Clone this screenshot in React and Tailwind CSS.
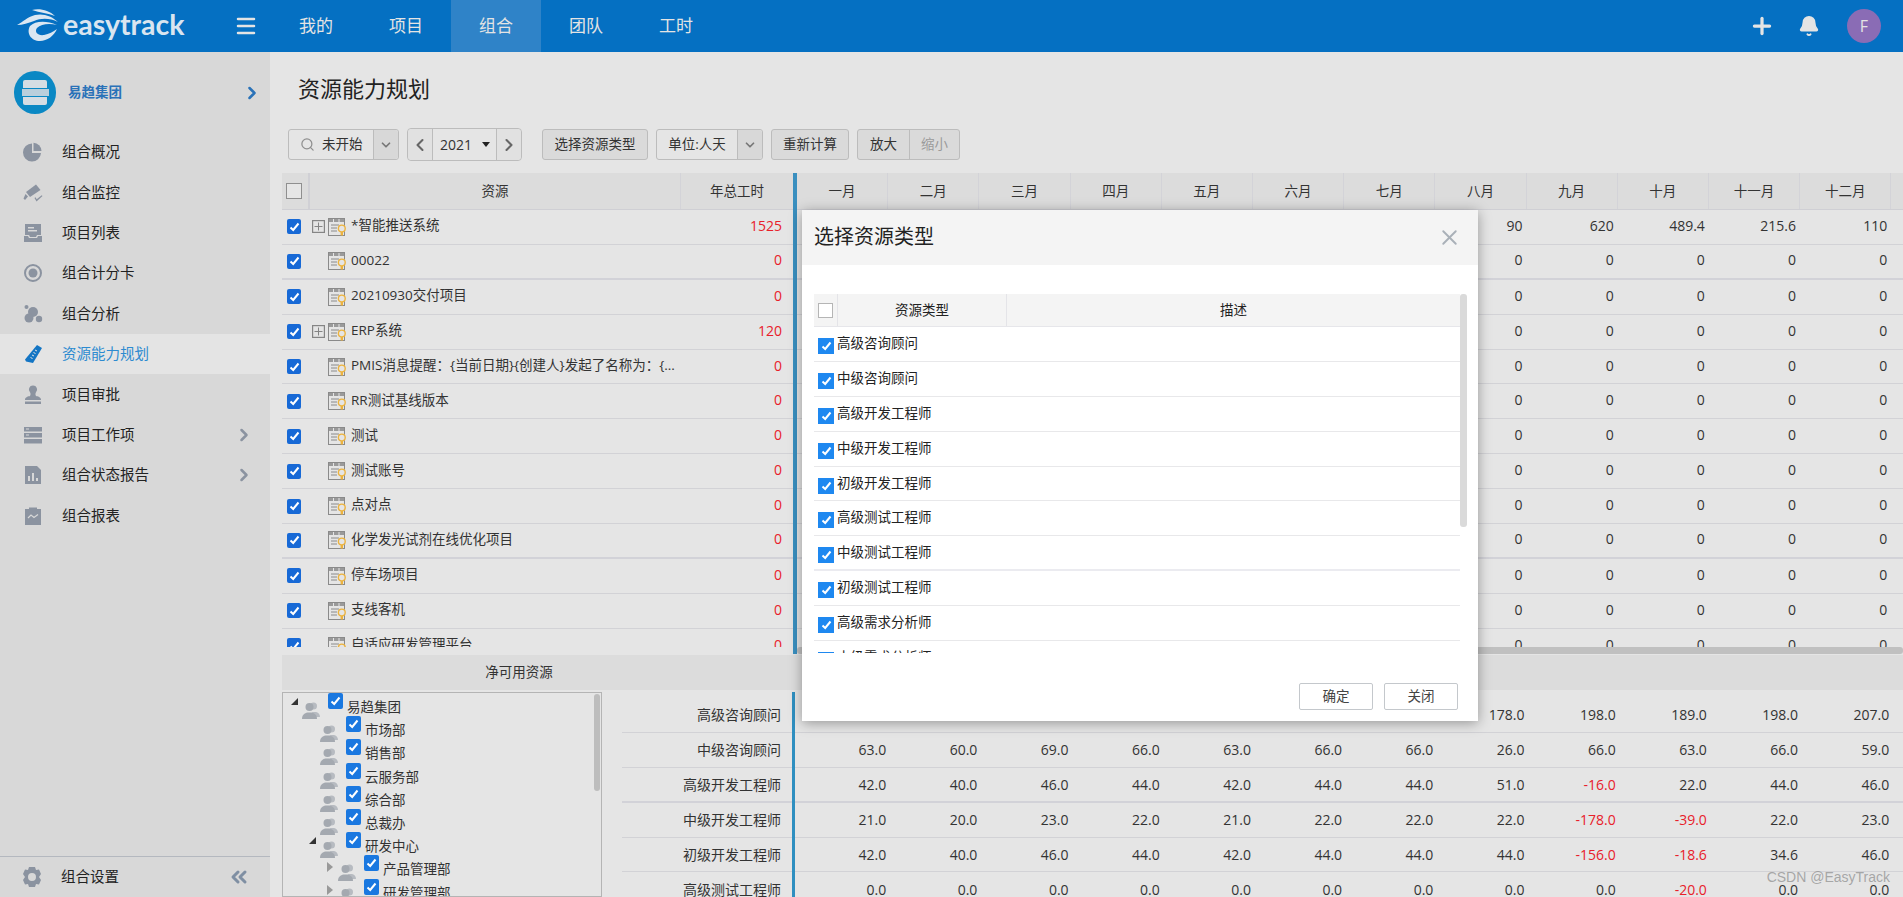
import { Plus, Bell, Menu, ChevronRight, ChevronLeft, ChevronDown, ChevronsLeft, Search, X } from "lucide-react";

const FONT = "font-['Open_Sans','Noto_Sans_CJK_SC',sans-serif]";

const MONTHS = ["一月", "二月", "三月", "四月", "五月", "六月", "七月", "八月", "九月", "十月", "十一月", "十二月"];

const NAV = ["我的", "项目", "组合", "团队", "工时"];

const PROJECTS = [
  { name: "*智能推送系统", total: "1525", tree: true, months: ["", "", "", "", "", "", "", "90", "620", "489.4", "215.6", "110"] },
  { name: "00022", total: "0", thick: true },
  { name: "20210930交付项目", total: "0" },
  { name: "ERP系统", total: "120", tree: true },
  { name: "PMIS消息提醒：{当前日期}{创建人}发起了名称为：{...", total: "0" },
  { name: "RR测试基线版本", total: "0" },
  { name: "测试", total: "0" },
  { name: "测试账号", total: "0" },
  { name: "点对点", total: "0" },
  { name: "化学发光试剂在线优化项目", total: "0", thick: true },
  { name: "停车场项目", total: "0" },
  { name: "支线客机", total: "0" },
  { name: "自适应研发管理平台", total: "0" },
];

const NET = [
  { label: "高级咨询顾问", values: ["", "", "", "", "", "", "", "178.0", "198.0", "189.0", "198.0", "207.0"] },
  { label: "中级咨询顾问", values: ["63.0", "60.0", "69.0", "66.0", "63.0", "66.0", "66.0", "26.0", "66.0", "63.0", "66.0", "59.0"] },
  { label: "高级开发工程师", thick: true, values: ["42.0", "40.0", "46.0", "44.0", "42.0", "44.0", "44.0", "51.0", "-16.0", "22.0", "44.0", "46.0"] },
  { label: "中级开发工程师", values: ["21.0", "20.0", "23.0", "22.0", "21.0", "22.0", "22.0", "22.0", "-178.0", "-39.0", "22.0", "23.0"] },
  { label: "初级开发工程师", values: ["42.0", "40.0", "46.0", "44.0", "42.0", "44.0", "44.0", "44.0", "-156.0", "-18.6", "34.6", "46.0"] },
  { label: "高级测试工程师", values: ["0.0", "0.0", "0.0", "0.0", "0.0", "0.0", "0.0", "0.0", "0.0", "-20.0", "0.0", "0.0"] },
];

const TREE = [
  { name: "易趋集团", level: 0, arrow: "open" },
  { name: "市场部", level: 1 },
  { name: "销售部", level: 1 },
  { name: "云服务部", level: 1 },
  { name: "综合部", level: 1 },
  { name: "总裁办", level: 1 },
  { name: "研发中心", level: 1, arrow: "open" },
  { name: "产品管理部", level: 2, arrow: "closed" },
  { name: "研发管理部", level: 2, arrow: "closed" },
];

const TYPES = [
  "高级咨询顾问",
  "中级咨询顾问",
  "高级开发工程师",
  "中级开发工程师",
  "初级开发工程师",
  "高级测试工程师",
  "中级测试工程师",
  "初级测试工程师",
  "高级需求分析师",
  "中级需求分析师",
];

function Logo() {
  return (
    <svg width="42" height="34" viewBox="0 0 42 34" fill="#dbe7f2">
      <path d="M15 1 C22 -1 32 1 38 7 C31 4 23 4 15 1Z" />
      <path d="M0 16 C6 13 10 8 18 6 C26 4 35 7 41 13 C33 9 24 9 17 12 C11 14 6 16 0 16Z" />
      <path d="M13 17 C18 12 29 11 40 16 C32 14 24 15 20 19 C17 23 21 27 27 26 C32 25 36 23 40 20 C37 27 30 32 23 32 C14 32 9 24 13 17Z" />
    </svg>
  );
}

const ICON_COLOR = "#8b93a0";

function MenuIcon({ name, color = ICON_COLOR }) {
  const p = { width: 20, height: 20, viewBox: "0 0 20 20", fill: color };
  switch (name) {
    case "pie":
      return (
        <svg {...p}>
          <path d="M9 1.500v9.500h9A9 9 0 1 1 9 1.500Z" />
          <path d="M10.500 0.800a8.600 8.600 0 0 1 8 8.200h-8Z" />
        </svg>
      );
    case "camera":
      return (
        <svg {...p}>
          <path d="M3 9 13 1.500l4.500 5.500L7 14Z" />
          <path d="M0.500 15.500l2-4.500 2.500 2.500-3 3.500Z" />
          <path d="M11.500 15l2 3.500 6-5.500-.8-.8-5 4-1.200-2Z" />
        </svg>
      );
    case "inbox":
      return (
        <svg {...p}>
          <path d="M2 1h16v11h-4l-1 2H7l-1-2H2Z" />
          <path d="M1 13h4l1 2h8l1-2h4v6H1Z" />
          <rect x="5" y="4" width="6" height="1.500" fill="#d8d8d8" />
          <rect x="5" y="7" width="9" height="1.500" fill="#d8d8d8" />
        </svg>
      );
    case "target":
      return (
        <svg {...p}>
          <path fillRule="evenodd" d="M10 1a9 9 0 1 1 0 18 9 9 0 0 1 0-18Zm0 2a7 7 0 1 0 0 14 7 7 0 0 0 0-14Z" />
          <circle cx="10" cy="10" r="4.500" />
        </svg>
      );
    case "dots":
      return (
        <svg {...p}>
          <circle cx="3.500" cy="3" r="2" />
          <circle cx="10" cy="8" r="5" />
          <circle cx="6" cy="14" r="4.500" />
          <circle cx="16" cy="15" r="3.200" />
        </svg>
      );
    case "ruler":
      return (
        <svg {...p}>
          <path d="M14 1l5 3-9 15-7-1.500-1-2Z" />
          <path d="M12 6l2 1M10.500 8.500l2 1M9 11l2 1M7.500 13.500l2 1" stroke="#e4e4e4" strokeWidth="1" />
        </svg>
      );
    case "stamp":
      return (
        <svg {...p}>
          <path d="M10 0.500a4 4 0 0 1 3 6.800c-.6 1-.8 2.400 0 3.700 1.500.4 5 1 5 3.500v.5H2V14.500c0-2.500 3.500-3.100 5-3.500.8-1.300.6-2.700 0-3.700A4 4 0 0 1 10 .5Z" />
          <rect x="2" y="16.500" width="16" height="2.500" />
        </svg>
      );
    case "rows":
      return (
        <svg {...p}>
          <rect x="1" y="2" width="18" height="4.500" />
          <rect x="1" y="8" width="18" height="4.500" />
          <rect x="1" y="14" width="18" height="4.500" />
          <rect x="3" y="3.500" width="3" height="1" fill="#d8d8d8" />
          <rect x="3" y="9.500" width="3" height="1" fill="#d8d8d8" />
        </svg>
      );
    case "report":
      return (
        <svg {...p}>
          <path d="M2 1h12l4 4v14H2Z" />
          <rect x="5" y="11" width="2" height="5" fill="#d8d8d8" />
          <rect x="9" y="8" width="2" height="8" fill="#d8d8d8" />
          <rect x="13" y="13" width="2" height="3" fill="#d8d8d8" />
        </svg>
      );
    case "clipboard":
      return (
        <svg {...p}>
          <path d="M2 3h4V1.500h8V3h4v16H2Z" />
          <path d="M5 12l3-3 3 2.500 4-3" stroke="#d8d8d8" strokeWidth="1.200" fill="none" />
        </svg>
      );
    default:
      return null;
  }
}

const MENU = [
  { name: "组合概况", icon: "pie" },
  { name: "组合监控", icon: "camera" },
  { name: "项目列表", icon: "inbox" },
  { name: "组合计分卡", icon: "target" },
  { name: "组合分析", icon: "dots" },
  { name: "资源能力规划", icon: "ruler", active: true },
  { name: "项目审批", icon: "stamp" },
  { name: "项目工作项", icon: "rows", more: true },
  { name: "组合状态报告", icon: "report", more: true },
  { name: "组合报表", icon: "clipboard" },
];

function Sidebar() {
  return (
    <aside className="w-[270px] shrink-0 bg-[#d8d8d8] flex flex-col">
      <div className="h-[80px] pt-[19px] pl-[14px] pr-[8px] flex items-start">
        <div className="w-[42px] h-[43px] rounded-full bg-[#0a88c4] flex flex-col items-center justify-center">
          <div className="w-[24px] h-[8px] rounded-t-[2px] bg-[#d5dde3]" />
          <div className="w-[27px] h-[7px] mt-px bg-[#b9cfdc]" />
          <div className="w-[24px] h-[8px] mt-px rounded-b-[2px] bg-[#d5dde3]" />
        </div>
        <span className="ml-[12px] mt-[11px] text-[13.500px] font-bold text-[#2a72b8]">易趋集团</span>
        <ChevronRight className="ml-auto mt-[12px] text-[#2a72b8]" size={20} strokeWidth={3} />
      </div>
      <nav>
        {MENU.map((item) => (
          <div
            key={item.name}
            className={`h-[40.400px] flex items-center pl-[23px] pr-[16px] text-[14.500px] ${
              item.active ? "bg-[#e4e4e4] text-[#2d8bd0]" : "text-[#222]"
            }`}
          >
            <MenuIcon name={item.icon} color={item.active ? "#1375c4" : ICON_COLOR} />
            <span className="ml-[19px]">{item.name}</span>
            {item.more && <ChevronRight className="ml-auto text-[#8b93a0]" size={20} strokeWidth={3} />}
          </div>
        ))}
      </nav>
      <div className="mt-auto h-[41px] border-t border-[#b4b8bf] flex items-center pl-[22px] pr-[19px] text-[14.500px] text-[#222]">
        <svg width="20" height="22" viewBox="0 0 20 22" fill={ICON_COLOR}>
          <path fillRule="evenodd" d="M7 1h6l1 3 3-.5L19 8l-2 3 2 3-2 4.500-3-.5-1 3H7l-1-3-3 .5L1 14l2-3-2-3 2-4.500L6 4ZM10 7a4 4 0 1 0 0 8 4 4 0 0 0 0-8Z" />
        </svg>
        <span className="ml-[19px]">组合设置</span>
        <ChevronsLeft className="ml-auto text-[#7f8fa3]" size={24} strokeWidth={3} />
      </div>
    </aside>
  );
}

function TopBar() {
  return (
    <header className="h-[52px] shrink-0 bg-[#0570c2] flex items-center text-[#e4e4e4]">
      <div className="w-[226px] shrink-0 flex items-center pl-[17px]">
        <Logo />
        <span className="ml-[4px] mb-[3px] font-['Lato',sans-serif] font-bold text-[28.500px] leading-none text-[#d9e5f0]">easytrack</span>
      </div>
      <Menu className="ml-[8px] w-[24px] shrink-0 text-[#e4e4e4]" size={24} strokeWidth={2.500} />
      <div className="ml-[13px] flex h-full">
        {NAV.map((n) => (
          <div
            key={n}
            className={`w-[90px] flex items-center justify-center text-[17px] ${n === "组合" ? "bg-[#2f83c8]" : ""}`}
          >
            {n}
          </div>
        ))}
      </div>
      <div className="ml-auto flex items-center pr-[22px]">
        <Plus size={26} strokeWidth={3} />
        <Bell className="ml-[23px]" size={22} fill="#e4e4e4" />
        <div className="ml-[27px] w-[34px] h-[34px] rounded-full bg-[#8a6cb5] flex items-center justify-center text-[16px] text-[#e4e4e4]">
          F
        </div>
      </div>
    </header>
  );
}

function Check({ on = true, box = "w-[14px] h-[15px]", color = "bg-[#1769d6]" }) {
  if (!on) return <span className="block w-[16px] h-[16px] border border-[#8f8f8f] bg-[#e6e6e6]" />;
  return (
    <span className={`${box} ${color} rounded-[2px] flex items-center justify-center shrink-0`}>
      <svg width="11" height="10" viewBox="0 0 11 10" fill="none">
        <path d="M1.500 5.500 4.200 8 9.500 1.500" stroke="#fff" strokeWidth="2" />
      </svg>
    </span>
  );
}

function ProjectIcon() {
  return (
    <svg width="18" height="18" viewBox="0 0 18 18" className="shrink-0">
      <rect x="0.500" y="0.500" width="16" height="17" fill="#e5e5e5" stroke="#8a8a8a" />
      <rect x="1" y="1" width="15" height="3" fill="#9a9a9a" />
      <path d="M5.500 1v3M11 1v3" stroke="#e5e5e5" />
      <path d="M3 7h8M3 10h6M3 13h6" stroke="#8a8a8a" />
      <circle cx="13.800" cy="10.500" r="3.400" fill="#e5e5e5" stroke="#ecb33f" strokeWidth="1.400" />
      <path d="M12.600 14h2.400v3.500h-2.400Z" fill="#ecb33f" />
    </svg>
  );
}

function ExpandBox() {
  return (
    <svg width="13" height="13" viewBox="0 0 13 13" fill="none" stroke="#858585">
      <rect x="0.500" y="0.500" width="12" height="12" strokeWidth="1.400" />
      <path d="M6.500 2.500v8M2.500 6.500h8" />
    </svg>
  );
}

function Person({ className = "" }) {
  return (
    <svg width="18" height="18" viewBox="0 0 18 18" fill="#a4a9b0" className={`shrink-0 ${className}`}>
      <circle cx="11.500" cy="5" r="3.500" fill="#b7bbc1" />
      <path d="M10 11h4c2 .5 4 2 4 5h-6Z" fill="#b7bbc1" />
      <circle cx="7.500" cy="6" r="4" />
      <path d="M0 18c0-4 2.500-6 5.500-6.500h4c3 .5 5.500 2.500 5.500 6.500Z" />
    </svg>
  );
}

function GroupBtn({ children, className = "" }) {
  return (
    <div className={`h-[31px] border border-[#bcbcbc] rounded-[3px] bg-[#dadada] flex items-center justify-center text-[13.500px] text-[#333] ${className}`}>
      {children}
    </div>
  );
}

function Toolbar() {
  return (
    <div className="h-[31px] mt-[24px] ml-[18px] flex items-center">
      <div className="w-[111px] h-[31px] border border-[#bcbcbc] rounded-[3px] flex items-center text-[13.500px] text-[#333]">
        <Search className="ml-[11px] text-[#8f8f8f]" size={15} />
        <span className="ml-[7px]">未开始</span>
        <span className="ml-auto w-[25px] h-full bg-[#d8d8d8] border-l border-[#bcbcbc] flex items-center justify-center rounded-r-[3px]">
          <ChevronDown className="text-[#777]" size={14} strokeWidth={3} />
        </span>
      </div>
      <div className="ml-[8px] w-[115px] h-[33px] border border-[#bcbcbc] rounded-[4px] flex items-center text-[14px] text-[#333]">
        <span className="w-[25px] h-full bg-[#e1e1e1] flex items-center justify-center rounded-l-[4px] border-r border-[#bcbcbc]">
          <ChevronLeft className="text-[#666]" size={20} strokeWidth={2.500} />
        </span>
        <span className="flex-1 h-full flex items-center justify-between pl-[7px] pr-[6px]">
          2021
          <span className="w-0 h-0 border-x-[4px] border-x-transparent border-t-[5px] border-t-[#222]" />
        </span>
        <span className="w-[25px] h-full bg-[#e1e1e1] flex items-center justify-center rounded-r-[4px] border-l border-[#bcbcbc]">
          <ChevronRight className="text-[#666]" size={20} strokeWidth={2.500} />
        </span>
      </div>
      <GroupBtn className="ml-[20px] w-[106px]">选择资源类型</GroupBtn>
      <div className="ml-[8px] w-[107px] h-[31px] border border-[#bcbcbc] rounded-[3px] flex items-center text-[13.500px] text-[#333]">
        <span className="flex-1 text-center">单位:人天</span>
        <span className="w-[25px] h-full bg-[#d8d8d8] border-l border-[#bcbcbc] flex items-center justify-center rounded-r-[3px]">
          <ChevronDown className="text-[#777]" size={14} strokeWidth={3} />
        </span>
      </div>
      <GroupBtn className="ml-[8px] w-[78px]">重新计算</GroupBtn>
      <div className="ml-[8px] w-[103px] h-[31px] border border-[#bcbcbc] rounded-[3px] bg-[#dadada] flex items-center text-[13.500px]">
        <span className="w-[52px] text-center text-[#333] border-r border-[#bcbcbc] leading-[29px]">放大</span>
        <span className="flex-1 text-center text-[#9a9a9a]">缩小</span>
      </div>
    </div>
  );
}

function ResourceTable() {
  return (
    <div className="h-[481px] mt-[13px] ml-[12px] flex text-[14px] text-[#333]">
      {/* frozen columns */}
      <div className="w-[511px] h-[474px] overflow-hidden shrink-0">
        <div className="h-[37px] flex bg-[#dcdcdc] border-b border-[#cfcfd4] text-[13.500px] items-center">
          <div className="w-[28px] h-full flex items-center justify-center border-r-2 border-[#d0d0d5] pr-[2px]">
            <Check on={false} />
          </div>
          <div className="w-[370px] text-center">资源</div>
          <div className="flex-1 h-full flex items-center justify-center border-l border-[#d3d3d8]">年总工时</div>
        </div>
        {PROJECTS.map((p) => (
          <div
            key={p.name}
            className={`h-[34.900px] flex items-center ${p.thick ? "border-b-2 border-[#d2d2d8]" : "border-b border-[#d2d2d6]"}`}
          >
            <div className="w-[30px] pl-[5px] shrink-0">
              <Check />
            </div>
            <div className="w-[16px] shrink-0 flex">{p.tree && <ExpandBox />}</div>
            <ProjectIcon />
            <span className="ml-[5px] mb-[3px] flex-1 truncate text-[13.500px]">{p.name}</span>
            <span className="mb-[3px] w-[60px] pr-[11px] text-right text-[#e8202a] shrink-0">{p.total}</span>
          </div>
        ))}
      </div>
      <div className="w-[4px] h-[481px] bg-[#3a8fbf] shrink-0" />
      {/* month columns */}
      <div className="flex-1 min-w-0 flex flex-col">
        <div className="h-[474px] overflow-hidden">
          <div className="h-[37px] flex bg-[#dcdcdc] border-b border-[#cfcfd4] text-[13.500px]">
            {MONTHS.map((m) => (
              <div key={m} className="w-[91.200px] shrink-0 flex items-center justify-center border-r border-[#d3d3d8]">
                {m}
              </div>
            ))}
          </div>
          {PROJECTS.map((p) => (
            <div
              key={p.name}
              className={`h-[34.900px] flex items-center ${p.thick ? "border-b-2 border-[#d2d2d8]" : "border-b border-[#d2d2d6]"}`}
            >
              {MONTHS.map((m, i) => (
                <div key={m} className="w-[91.200px] shrink-0 pr-[4px] mb-[3px] text-right">
                  {p.months ? p.months[i] : "0"}
                </div>
              ))}
            </div>
          ))}
        </div>
        <div className="h-[7px] rounded-[3px] bg-[#c0c0c0]" />
      </div>
    </div>
  );
}

function NetResources() {
  return (
    <>
      <div className="ml-[12px] mt-[1px] h-[35px] bg-[#dcdcdc] text-[13.500px] text-[#333]">
        <div className="w-[474px] h-full flex items-center justify-center">净可用资源</div>
      </div>
      <div className="ml-[12px] mt-[2px] flex flex-1 min-h-0 text-[14px] text-[#333]">
        <div className="w-[320px] relative border border-[#b4b4b4] shrink-0 overflow-hidden">
          {TREE.map((t) => (
            <div
              key={t.name}
              className={`h-[23.200px] flex items-start ${
                t.level === 0 ? "pl-[8px]" : t.level === 1 ? "pl-[26px]" : "pl-[44px]"
              }`}
            >
              <span className="w-[12px] h-[23px] flex items-center shrink-0">
                {t.arrow === "open" && (
                  <span className="block mb-[6px] w-0 h-0 border-l-[7px] border-l-transparent border-b-[7px] border-b-[#333]" />
                )}
                {t.arrow === "closed" && (
                  <span className="block w-0 h-0 border-y-[5px] border-y-transparent border-l-[6px] border-l-[#999]" />
                )}
              </span>
              <Person className="mt-[8px] -ml-[1px]" />
              <span className="ml-[8px] shrink-0">
                <Check box="w-[15px] h-[16px]" color="bg-[#1a78e0]" />
              </span>
              <span className="ml-[4px] mt-[4px] text-[13.500px] whitespace-nowrap">{t.name}</span>
            </div>
          ))}
          <div className="absolute right-[1px] top-[1px] w-[6px] h-[97px] rounded-[3px] bg-[#bdbdbd]" />
        </div>
        <div className="flex-1 min-w-0 flex pl-[20px]">
          <div className="w-[170px] shrink-0 pt-[6px]">
            {NET.map((r) => (
              <div
                key={r.label}
                className={`h-[34.900px] pr-[11px] flex items-center justify-end ${r.thick ? "border-b-2 border-[#d2d2d8]" : "border-b border-[#d2d2d6]"}`}
              >
                {r.label}
              </div>
            ))}
          </div>
          <div className="w-[3px] shrink-0 bg-[#2f8fc0]" />
          <div className="flex-1 min-w-0 pt-[6px]">
            {NET.map((r) => (
              <div
                key={r.label}
                className={`h-[34.900px] flex items-center ${r.thick ? "border-b-2 border-[#d2d2d8]" : "border-b border-[#d2d2d6]"}`}
              >
                {r.values.map((v, i) => (
                  <div key={i} className={`w-[91.200px] shrink-0 text-right ${v.startsWith("-") ? "text-[#e8202a]" : ""}`}>
                    {v}
                  </div>
                ))}
              </div>
            ))}
          </div>
        </div>
      </div>
    </>
  );
}

function TypeModal() {
  return (
    <div className="absolute left-[802px] top-[210px] w-[676px] h-[511px] bg-white shadow-[0_2px_12px_rgba(0,0,0,0.35)] flex flex-col text-[#222]">
      <div className="h-[55px] shrink-0 bg-[#f4f4f4] flex items-center justify-between pl-[12px] pr-[16px]">
        <span className="text-[20px] mb-[2px]">选择资源类型</span>
        <X className="text-[#a9b0b8]" size={25} strokeWidth={1.800} />
      </div>
      <div className="mt-[29px] ml-[12px] flex">
        <div className="w-[646px]">
          <div className="h-[33px] flex items-center bg-[#f4f4f4] border-b border-[#e6e6ea] text-[13.500px]">
            <div className="w-[24px] h-full flex items-center justify-center border-r border-[#e4e4e8]">
              <span className="block w-[15px] h-[15px] border border-[#b5b5b5] bg-white" />
            </div>
            <div className="w-[169px] h-full flex items-center justify-center border-r border-[#e4e4e8]">资源类型</div>
            <div className="flex-1 text-center">描述</div>
          </div>
          <div className="h-[326px] overflow-hidden text-[13.500px]">
            {TYPES.map((t, i) => (
              <div key={t} className={`h-[34.900px] flex ${i === 6 ? "border-b-2 border-[#ebebf0]" : "border-b border-[#e8e8ea]"}`}>
                <span className="ml-[4px] mt-[11px]">
                  <Check box="w-[16px] h-[16px]" color="bg-[#1e88f0] !rounded-none" />
                </span>
                <span className="ml-[3px] mt-[6px]">{t}</span>
              </div>
            ))}
          </div>
        </div>
        <div className="w-[7px] h-[233px] rounded-[3px] bg-[#dadada]" />
      </div>
      <div className="mt-[30px] mr-[20px] flex justify-end gap-[11px] text-[13.500px] text-[#444]">
        <button className="w-[74px] h-[27px] border border-[#c4c8cc] rounded-[2px] bg-white">确定</button>
        <button className="w-[74px] h-[27px] border border-[#c4c8cc] rounded-[2px] bg-white">关闭</button>
      </div>
    </div>
  );
}

export default function App() {
  return (
    <div className={`relative h-screen overflow-hidden flex flex-col bg-[#e5e5e5] ${FONT}`}>
      <TopBar />
      <div className="flex flex-1 min-h-0">
        <Sidebar />
        <main className="flex-1 min-w-0 flex flex-col">
          <h1 className="ml-[28px] mt-[19px] h-[34px] text-[22px] leading-[34px] font-normal text-[#222]">资源能力规划</h1>
          <Toolbar />
          <ResourceTable />
          <NetResources />
        </main>
      </div>
      <TypeModal />
      <div className="absolute right-[13px] bottom-[9px] font-['Liberation_Sans',sans-serif] text-[14px] text-[#8a8a8a]/70">CSDN @EasyTrack</div>
    </div>
  );
}
